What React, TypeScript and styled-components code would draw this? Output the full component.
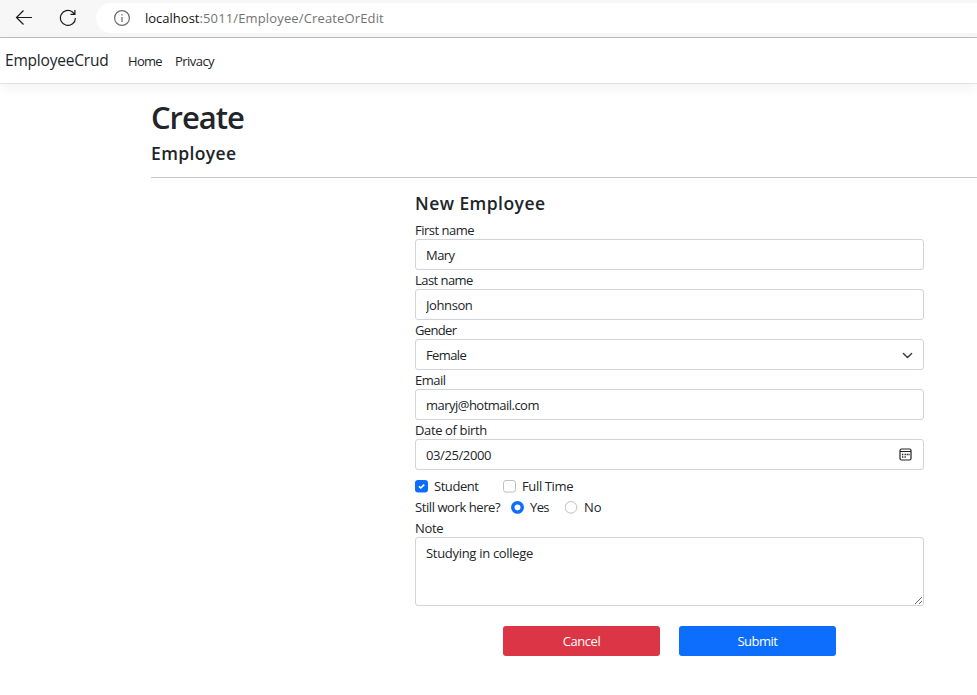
import React from "react";
import styled, { createGlobalStyle, css } from "styled-components";

const GlobalStyle = createGlobalStyle`
  *, *::before, *::after { box-sizing: border-box; }
  html, body { margin: 0; background: #fff; overflow: hidden; }
  body {
    font-family: "Open Sans", "Noto Sans", sans-serif;
    font-size: 13px;
    line-height: 19px;
    color: #212529;
  }
`;

const Page = styled.div`
  width: 977px;
  height: 695px;
  overflow: hidden;
  background: #fff;
`;

const BrowserBar = styled.div`
  display: flex;
  height: 38px;
  background: #f7f7f7;
  border-bottom: 1px solid #bdbdbd;
`;

const BarIcon = styled.svg`
  flex: none;
  fill: none;
  stroke: #1b1b1b;
  stroke-width: 1.2;
`;

const BarButtons = styled.div`
  display: flex;
  flex: none;
  width: 96px;
  padding: 9px 0 0 15px;
  gap: 26px;
`;

const AddressField = styled.div`
  display: flex;
  flex: 1;
  height: 30px;
  margin-top: 3px;
  padding: 6px 0 0 17px;
  gap: 14px;
  background: #fff;
  border-radius: 15px 0 0 15px;
`;

const Tracked = styled.span<{ $track?: number }>`
  letter-spacing: ${(p) => p.$track ?? 0}px;
  white-space: nowrap;
`;

const Url = styled(Tracked)`
  font-size: 13px;
  line-height: 18px;
  color: #747474;
`;

const Host = styled.span`
  color: #111;
  letter-spacing: 0;
`;

const Navbar = styled.nav`
  display: flex;
  align-items: center;
  height: 46px;
  padding-left: 5px;
  border-bottom: 1px solid #dee2e6;
  box-shadow: 0 4px 12px rgba(0, 0, 0, 0.05);
`;

const Brand = styled(Tracked)`
  width: 123px;
  font-size: 15.5px;
`;

const NavItem = styled(Tracked)`
  width: 47px;
  padding-top: 2px;
`;

const Main = styled.main`
  padding: 14px 0 0 151px;
`;

const Title = styled.h1`
  margin: 0;
  font-size: 31px;
  font-weight: 600;
  line-height: 38px;
  letter-spacing: -1.05px;
`;

const Heading = styled.h4<{ $track?: number }>`
  margin: 0;
  font-size: 17.5px;
  font-weight: 600;
  line-height: 22px;
  letter-spacing: ${(p) => p.$track ?? 0}px;
`;

const Header = styled.header`
  display: flex;
  flex-direction: column;
  gap: 6px;
  height: 80px;
  border-bottom: 1px solid #c8c8c9;
`;

const Form = styled.form`
  display: flex;
  flex-direction: column;
  width: 509px;
  margin: 14px 0 0 264px;
`;

const Fields = styled.div`
  margin-top: 6px;
`;

const Field = styled.label`
  display: block;
`;

const Caption = styled(Tracked)`
  display: block;
  height: 19px;
  line-height: 20px;
`;

const ControlFrame = styled.div`
  display: flex;
  align-items: center;
  height: 31px;
  padding: 1px 10px 0;
  border: 1px solid #ced4da;
  border-radius: 3px;
`;

const controlText = css<{ $track?: number }>`
  min-width: 0;
  padding: 0;
  border: 0;
  outline: 0;
  background: transparent;
  color: #212529;
  font: inherit;
  letter-spacing: ${(p) => p.$track ?? 0}px;
`;

const Input = styled.input<{ $track?: number }>`
  ${controlText}
  flex: 1;
`;

const Select = styled.select<{ $track?: number }>`
  ${controlText}
  flex: 1;
  appearance: none;
`;

const Chevron = styled.svg`
  flex: none;
  width: 11px;
  height: 11px;
  fill: none;
  stroke: #343a40;
  stroke-width: 2;
  stroke-linecap: round;
  stroke-linejoin: round;
`;

const CalendarIcon = styled.svg`
  flex: none;
  width: 13px;
  height: 13px;
  margin: -2px 1px 0 0;
`;

const Options = styled.div`
  display: flex;
  align-items: center;
  height: 21px;
`;

const CheckOptions = styled(Options)`
  margin-top: 6px;
`;

const Option = styled.label<{ $width?: number }>`
  display: flex;
  align-items: center;
  width: ${(p) => (p.$width ? `${p.$width}px` : "auto")};
  gap: 6px;
`;

const Question = styled(Tracked)`
  width: 96px;
`;

const Mark = styled.svg`
  flex: none;
  width: 13px;
  height: 13px;
`;

const Note = styled.textarea<{ $track?: number }>`
  ${controlText}
  display: block;
  width: 509px;
  height: 69px;
  padding: 6px 10px;
  border: 1px solid #ced4da;
  border-radius: 3px;
  resize: both;
`;

const Actions = styled.div`
  display: flex;
  gap: 19px;
  margin: 20px 0 0 88px;
`;

const Button = styled.button<{ $color: string; $track?: number }>`
  width: 157px;
  height: 30px;
  padding: 0;
  border: 0;
  border-radius: 3px;
  background: ${(p) => p.$color};
  color: #fff;
  font: inherit;
  letter-spacing: ${(p) => p.$track ?? 0}px;
`;

type TextFieldProps = { label: string; value: string; labelTrack: number; track: number; children?: React.ReactNode };

const TextField = ({ label, value, labelTrack, track, children }: TextFieldProps) => (
  <Field>
    <Caption $track={labelTrack}>{label}</Caption>
    <ControlFrame>
      <Input $track={track} defaultValue={value} spellCheck={false} />
      {children}
    </ControlFrame>
  </Field>
);

const CheckMark = ({ checked }: { checked?: boolean }) => (
  <Mark viewBox="0 0 13 13">
    {checked ? (
      <>
        <rect width="13" height="12.5" rx="3" fill="#0d6efd" />
        <path d="M4 6.3 5.8 8 9.2 4.6" fill="none" stroke="#fff" strokeWidth="1.6" />
      </>
    ) : (
      <rect x="0.5" y="0.5" width="12" height="11.6" rx="2.5" fill="#fff" stroke="#bfbfbf" />
    )}
  </Mark>
);

const RadioMark = ({ checked }: { checked?: boolean }) => (
  <Mark viewBox="0 0 13 13">
    {checked ? (
      <>
        <circle cx="6.5" cy="6.4" r="6.4" fill="#0d6efd" />
        <circle cx="6.5" cy="6.4" r="3" fill="#fff" />
      </>
    ) : (
      <circle cx="6" cy="6.4" r="5.8" fill="#fff" stroke="#bfbfbf" />
    )}
  </Mark>
);

export default function App() {
  return (
    <Page>
      <GlobalStyle />
      <BrowserBar>
        <BarButtons>
          <BarIcon width="18" height="18" viewBox="0 0 18 18">
            <path d="M17 8.5H1.5M8.5 1.5l-7 7 7 7" />
          </BarIcon>
          <BarIcon width="18" height="18" viewBox="0 0 18 18">
            <path d="M16.4 8.9A7.5 7.5 0 1 1 13.5 3l1.8 1.9M15.9 1v4.3h-4.4" />
          </BarIcon>
        </BarButtons>
        <AddressField>
          <BarIcon width="18" height="18" viewBox="0 0 18 18">
            <circle cx="9" cy="9" r="7.4" stroke="#6b6b6b" />
            <path d="M9 8v5M9 5v1.6" stroke="#6b6b6b" />
          </BarIcon>
          <Url $track={0.14}>
            <Host>localhost</Host>:5011/Employee/CreateOrEdit
          </Url>
        </AddressField>
      </BrowserBar>
      <Navbar>
        <Brand $track={-0.2}>EmployeeCrud</Brand>
        <NavItem $track={-0.7}>Home</NavItem>
        <NavItem $track={-0.55}>Privacy</NavItem>
      </Navbar>
      <Main>
        <Header>
          <Title>Create</Title>
          <Heading $track={0.38}>Employee</Heading>
        </Header>
        <Form>
          <Heading $track={0.45}>New Employee</Heading>
          <Fields>
            <TextField label="First name" value="Mary" labelTrack={-0.5} track={-0.55} />
            <TextField label="Last name" value="Johnson" labelTrack={-0.55} track={-0.4} />
            <Field>
              <Caption $track={-0.65}>Gender</Caption>
              <ControlFrame>
                <Select $track={-0.6} defaultValue="Female">
                  <option>Female</option>
                  <option>Male</option>
                </Select>
                <Chevron viewBox="0 0 16 16">
                  <path d="m2 5 6 6 6-6" />
                </Chevron>
              </ControlFrame>
            </Field>
            <TextField label="Email" value="maryj@hotmail.com" labelTrack={-0.5} track={-0.52} />
            <TextField label="Date of birth" value="03/25/2000" labelTrack={-0.37} track={-0.4}>
              <CalendarIcon viewBox="0 0 13 13">
                <rect x="1" y="1" width="11" height="11" rx="1.5" fill="none" stroke="#222" strokeWidth="1.2" />
                <path d="M1 3.5h11" stroke="#222" />
                <path
                  d="M5.5 6.5h1.3M7.6 6.5h1.3M9.5 6.5h1.1M3 6.5h1.3M3 9h1.3M5.5 9h1.3"
                  stroke="#222"
                  strokeWidth="1.3"
                />
              </CalendarIcon>
            </TextField>
          </Fields>
          <CheckOptions>
            <Option $width={88}>
              <CheckMark checked />
              <Tracked $track={-0.45}>Student</Tracked>
            </Option>
            <Option>
              <CheckMark />
              <Tracked $track={-0.36}>Full Time</Tracked>
            </Option>
          </CheckOptions>
          <Options>
            <Question $track={-0.42}>Still work here?</Question>
            <Option $width={54}>
              <RadioMark checked />
              <Tracked $track={-0.6}>Yes</Tracked>
            </Option>
            <Option>
              <RadioMark />
              <Tracked $track={-0.1}>No</Tracked>
            </Option>
          </Options>
          <Caption $track={-0.3}>Note</Caption>
          <Note $track={-0.3} defaultValue="Studying in college" spellCheck={false} />
          <Actions>
            <Button type="button" $color="#dc3545" $track={-0.45}>Cancel</Button>
            <Button type="button" $color="#0d6efd" $track={-0.5}>Submit</Button>
          </Actions>
        </Form>
      </Main>
    </Page>
  );
}
